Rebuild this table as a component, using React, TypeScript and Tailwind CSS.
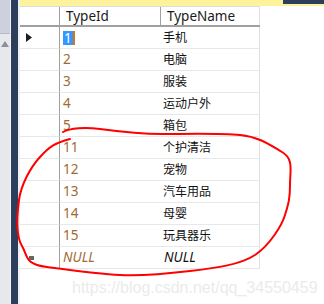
import React from 'react';

const rows = [
    { id: '1', name: '手机' },
    { id: '2', name: '电脑' },
    { id: '3', name: '服装' },
    { id: '4', name: '运动户外' },
    { id: '5', name: '箱包' },
    { id: '11', name: '个护清洁' },
    { id: '12', name: '宠物' },
    { id: '13', name: '汽车用品' },
    { id: '14', name: '母婴' },
    { id: '15', name: '玩具器乐' },
];

const font = "font-['Noto_Sans','Noto_Sans_CJK_SC',sans-serif]";

const App: React.FC = () => {
    return (
        <div className={`relative w-[324px] h-[304px] overflow-hidden bg-white flex ${font}`}>
            {/* Left tool panel */}
            <div className="w-[10px] h-full flex flex-col">
                <div className="h-[33px] bg-[#ccd1dd]" />
                <div className="flex-1 bg-[#e7e8ec] border-t border-[#b4bac8] pt-[7px]">
                    <svg width="8" height="6" viewBox="0 0 8 6" className="ml-[1px]">
                        <path d="M0 6 L4 0 L8 6 Z" fill="#8b909b" />
                    </svg>
                </div>
            </div>
            <div className="w-[1px] h-full bg-[#f3f3f5]" />
            <div className="w-[7px] h-full bg-[#2d3e5c]" />
            <div className="w-[2px] h-full bg-[#eeeff3]" />

            {/* Grid area */}
            <div className="flex-1 h-full flex flex-col">
                <div className="h-[6px] bg-[#fff29d] flex justify-end">
                    <div className="w-[41px] h-[4px] bg-[#2d3e5c]" />
                </div>
                <div className="h-[1px] bg-[#dcdcdc] w-[240px]" />

                {/* Header */}
                <div className="flex h-[20px] border-b-2 border-[#a0a0a0] w-[240px] text-[13.5px] text-[#1a1a1a]">
                    <div className="w-[40px] border-r border-[#a0a0a0]" />
                    <div className="w-[101px] border-r border-[#a0a0a0] pl-[6px] flex items-center">TypeId</div>
                    <div className="w-[99px] border-r border-[#e0e0e0] pl-[6px] flex items-center">TypeName</div>
                </div>

                {/* Rows */}
                {rows.map((r, i) => (
                    <div key={r.id} className="flex h-[22px] w-[240px] text-[13.5px]">
                        <div className="w-[40px] border-r border-[#a0a0a0] border-b border-b-[#e8e8e8] flex items-center pl-[6px]">
                            {i === 0 && (
                                <svg width="6" height="9" viewBox="0 0 6 9">
                                    <path d="M0 0 L6 4.5 L0 9 Z" fill="#1e1e1e" />
                                </svg>
                            )}
                        </div>
                        <div className="w-[101px] border-b border-[#e8e8e8] pl-[3px] flex items-center text-[#a06a30]">
                            {i === 0 ? (
                                <span className="bg-[#3399ff] text-white h-[14px] leading-[14px] pl-[1px] pr-[1px] border-r-2 border-[#e07010]">{r.id}</span>
                            ) : (
                                r.id
                            )}
                        </div>
                        <div className="w-[99px] border-r border-[#e0e0e0] border-b border-b-[#e8e8e8] pl-[2px] flex items-center text-[12px] text-[#111]">
                            {r.name}
                        </div>
                    </div>
                ))}

                {/* New row */}
                <div className="flex h-[22px] w-[240px] text-[13.5px] italic">
                    <div className="w-[40px] border-r border-[#a0a0a0] border-b border-b-[#e8e8e8] flex items-center pl-[9px]">
                        <svg width="5" height="4" viewBox="0 0 5 4">
                            <path d="M0 0 L5 0 L5 4 L0 4 Z" fill="#666" />
                        </svg>
                    </div>
                    <div className="w-[101px] border-b border-[#e8e8e8] pl-[3px] flex items-center text-[#a06a30]">NULL</div>
                    <div className="w-[99px] border-r border-[#e0e0e0] border-b border-b-[#e8e8e8] pl-[3px] flex items-center text-[#111]">NULL</div>
                </div>
            </div>

            {/* Red hand-drawn circle */}
            <svg className="absolute left-0 top-0 pointer-events-none" width="324" height="304" viewBox="0 0 324 304">
                <path
                    d="M63,132 C70,128 85,127 100,129 S140,134 162,134 S220,133 240,135 S270,145 282,152 S290,170 290,185 S288,205 285,215 S270,245 255,255 S215,268 190,271 S140,276 120,275 S70,270 47,267 S28,256 22,246 S17,215 19,200 S30,168 40,157 S55,143 70,139"
                    fill="none"
                    stroke="#ff0000"
                    strokeWidth="2"
                    strokeLinecap="round"
                />
            </svg>

            {/* Watermark */}
            <div className="absolute left-[72px] top-[276px] text-[16px] text-[#ebebeb] font-['Liberation_Sans',sans-serif] whitespace-nowrap">
                https://blog.csdn.net/qq_34550459
            </div>
        </div>
    );
};

export default App;
